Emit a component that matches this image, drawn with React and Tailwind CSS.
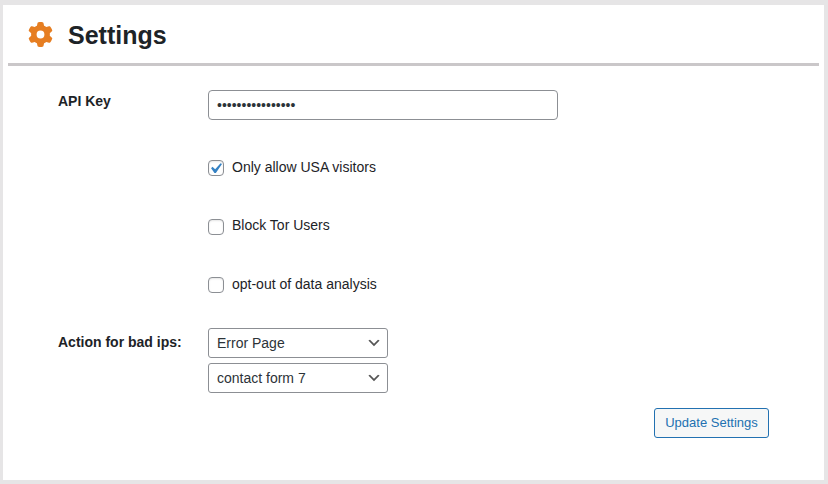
import { FaGear } from "react-icons/fa6";

function CheckRow({ label, checked, className, textClassName = "leading-5" }) {
  return (
    <label className={`flex h-5 items-start ${className}`}>
      <span className="mt-[3px] block size-4 rounded-[4px] border border-[#8c8f94] bg-white shadow-[inset_0_1px_2px_rgba(0,0,0,0.1)]">
        {checked && (
          <svg viewBox="0 0 20 20" className="-mt-[3px] -ml-1 block size-[21px] max-w-none" fill="#3582c4">
            <path d="M14.83 4.89l1.34.94-5.81 8.38H9.02L5.78 9.67l1.34-1.25 2.57 2.4z" />
          </svg>
        )}
      </span>
      <span className={`ml-2 ${textClassName}`}>{label}</span>
    </label>
  );
}

function Select({ value }) {
  return (
    <div className="flex h-[30px] w-[180px] items-center justify-between rounded-[3px] border border-[#8c8f94] bg-white pr-[5px] pl-2 text-[#2c3338]">
      <span>{value}</span>
      <svg viewBox="0 0 20 20" className="size-4" fill="#555">
        <path d="M5 6l5 5 5-5 2 1-7 7-7-7 2-1z" />
      </svg>
    </div>
  );
}

export default function App() {
  return (
    <div className="h-[484px] w-[828px] bg-[#e6e5e6] pt-[5px] pr-1 pb-1 pl-[3px] font-['Liberation_Sans',Arial,sans-serif] text-sm text-[#1d2327]">
      <main className="h-[475px] bg-white px-[5px]">
        <header className="flex h-[61px] items-center border-b-[3px] border-[#cac7c9] pl-[20px]">
          <FaGear className="mt-px size-[25px] text-[#e67e22]" />
          <h1 className="ml-[15px] pt-0.5 text-[25px] leading-8 font-bold">Settings</h1>
        </header>
        <section className="grid grid-cols-[150px_1fr] pr-[50px] pl-[50px]">
          <div className="pt-[25px] leading-5 font-bold">API Key</div>
          <div className="pt-6">
            <input
              type="password"
              defaultValue="abcdefghijklmnop"
              className="block h-[30px] w-[350px] rounded-[4px] border border-[#8c8f94] px-2 text-sm text-[#2c3338] outline-none"
            />
            <CheckRow label="Only allow USA visitors" checked className="mt-[37px]" />
            <CheckRow label="Block Tor Users" className="mt-[39px]" textClassName="leading-[18px]" />
            <CheckRow label="opt-out of data analysis" className="mt-[38px]" />
          </div>
          <div className="pt-[38px] leading-5 font-bold">Action for bad ips:</div>
          <div className="flex flex-col gap-[5px] pt-[34px]">
            <Select value="Error Page" />
            <Select value="contact form 7" />
          </div>
        </section>
        <footer className="flex justify-end pt-[15px] pr-[50px]">
          <button className="h-[30px] w-[115px] rounded-[3px] border border-[#2271b1] bg-[#f6f7f7] text-[13px] text-[#2271b1]">
            Update Settings
          </button>
        </footer>
      </main>
    </div>
  );
}
